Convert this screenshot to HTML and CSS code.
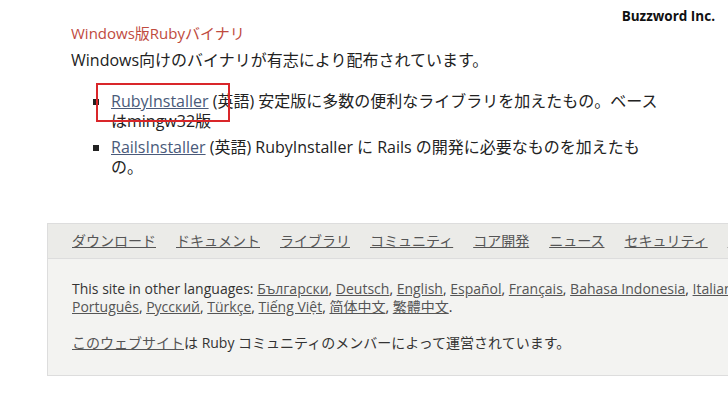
FILE: index.html
```html
<!DOCTYPE html>
<html lang="ja">
<head>
    <meta charset="UTF-8">
    <title>Windows版Rubyバイナリ</title>
    <link rel="stylesheet" href="styles.css">
</head>
<body>
    <div class="brand">Buzzword Inc.</div>

    <div class="content">
        <h3 class="section-title">Windows版Rubyバイナリ</h3>
        <p>Windows向けのバイナリが有志により配布されています。</p>

        <ul class="binaries">
            <li>
                <span class="mark"><a href="#">RubyInstaller</a> (英語)</span> 安定版に多数の便利なライブラリを加えたもの。ベースはmingw32版
            </li>
            <li>
                <a href="#">RailsInstaller</a> (英語) RubyInstaller に Rails の開発に必要なものを加えたもの。
            </li>
        </ul>
    </div>

    <div class="footer">
        <nav class="footer-nav">
            <a href="#">ダウンロード</a>
            <a href="#">ドキュメント</a>
            <a href="#">ライブラリ</a>
            <a href="#">コミュニティ</a>
            <a href="#">コア開発</a>
            <a href="#">ニュース</a>
            <a href="#">セキュリティ</a>
            <a href="#">Rubyとは</a>
        </nav>
        <div class="footer-body">
            <p class="langs">This site in other languages: <a href="#">Български</a>, <a href="#">Deutsch</a>, <a href="#">English</a>, <a href="#">Español</a>, <a href="#">Français</a>, <a href="#">Bahasa Indonesia</a>, <a href="#">Italiano</a>, <a href="#">日本語</a>, <a href="#">한국어</a>, <a href="#">polski</a>, <a href="#">Português</a>, <a href="#">Русский</a>, <a href="#">Türkçe</a>, <a href="#">Tiếng Việt</a>, <a href="#">简体中文</a>, <a href="#">繁體中文</a>.</p>
            <p><a href="#">このウェブサイト</a>は Ruby コミュニティのメンバーによって運営されています。</p>
        </div>
    </div>
</body>
</html>
```

FILE: styles.css
```css
body {
    margin: 0;
    font-family: "Open Sans", "Noto Sans CJK JP", sans-serif;
    color: #222;
    background: #fff;
    overflow: hidden;
    width: 728px;
}

.brand {
    position: absolute;
    top: 7px;
    right: 13px;
    font-size: 13.5px;
    font-weight: bold;
    color: #111;
}

.content {
    padding: 20px 0 0 71px;
    width: 600px;
    font-size: 16px;
}

.section-title {
    margin: 0;
    font-size: 15px;
    font-weight: normal;
    color: #c04b40;
    line-height: 26px;
}

.content p {
    margin: 1px 0 0;
    line-height: 26px;
}

.binaries {
    list-style: square;
    margin: 18px 0 0;
    padding-left: 40px;
    width: 555px;
}

.binaries li {
    line-height: 20px;
    margin-bottom: 6px;
}

.binaries a {
    color: #4a5a7a;
}

.mark {
    position: relative;
}

.mark::after {
    content: "";
    position: absolute;
    left: -15px;
    top: -7px;
    width: 130px;
    height: 35px;
    border: 2px solid #d9262a;
}

.footer {
    margin: 46px 0 0 47px;
    width: 1000px;
    border: 1px solid #ddd;
    background: #f3f3f1;
    font-size: 14px;
}

.footer-nav {
    display: flex;
    gap: 20px;
    white-space: nowrap;
    padding: 6px 0 0 24px;
    height: 28px;
    line-height: 22px;
    background: #ebebe8;
    border-bottom: 1px solid #ddd;
    overflow: hidden;
}

.footer-nav a,
.footer-body a {
    color: #555;
}

.footer-body {
    padding: 21px 0 23px 24px;
    color: #333;
}

.footer-body p {
    margin: 0 0 18px;
    line-height: 18px;
}

.footer-body p:last-child {
    margin: 0;
}

.langs {
    width: 820px;
}
```
